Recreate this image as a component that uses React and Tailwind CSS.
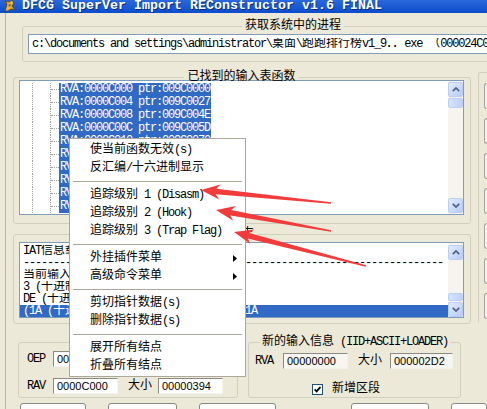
import React from "react";

function M({ t }) {
  const parts = t.split(/([\x20-\x7E]+)/).filter((p) => p !== "");
  return (
    <>
      {parts.map((p, i) =>
        /^[\x20-\x7E]+$/.test(p) ? (
          <span key={i} className="tracking-[-1.2px] whitespace-pre">
            {p}
          </span>
        ) : (
          <span key={i}>{p}</span>
        )
      )}
    </>
  );
}

function ScrollBtn({ up }) {
  return (
    <div className="w-[15px] h-[15px] shrink-0 rounded-[2px] border border-[#BACDF4] bg-linear-to-br from-[#E4ECFE] to-[#B7CBF7] flex items-center justify-center">
      <svg width="8" height="5" viewBox="0 0 8 5">
        <path
          d={up ? "M0.8 4.2L4 1L7.2 4.2" : "M0.8 0.8L4 4L7.2 0.8"}
          fill="none"
          stroke="#4D6185"
          strokeWidth="1.7"
        />
      </svg>
    </div>
  );
}

function Thumb({ h }) {
  return (
    <div
      className={
        "w-[15px] shrink-0 rounded-[2px] border border-[#BACDF4] bg-linear-to-r from-[#D7E3FD] to-[#BFD1F8] " +
        h
      }
    />
  );
}

function arrowPoints(tx, ty, ex, ey) {
  const dx = ex - tx;
  const dy = ey - ty;
  const L = Math.hypot(dx, dy);
  const ux = dx / L;
  const uy = dy / L;
  const nx = -uy;
  const ny = ux;
  const p = (a, b) => [tx + ux * a + nx * b, ty + uy * a + ny * b];
  const pts = [
    [tx, ty],
    p(19, 7.5),
    p(15, 2.8),
    [ex + nx * 0.7, ey + ny * 0.7],
    [ex - nx * 0.7, ey - ny * 0.7],
    p(15, -2.8),
    p(19, -7.5),
  ];
  return pts.map((q) => q[0].toFixed(1) + "," + q[1].toFixed(1)).join(" ");
}

const treeRows = [
  "RVA:0000C000 ptr:009C0000",
  "RVA:0000C004 ptr:009C0027",
  "RVA:0000C008 ptr:009C004E",
  "RVA:0000C00C ptr:009C005D",
  "RVA:0000C010 ptr:009C0070",
  "RVA:0000C014 ptr:009C0088",
  "RVA:0000C018 ptr:009C009A",
  "RVA:0000C01C ptr:009C00B1",
  "RVA:0000C020 ptr:009C00C9",
  "RVA:0000C024 ptr:009C00DE",
];

const iatRows = [
  "IAT信息载入完毕",
  "-".repeat(70),
  "当前输入表:",
  "3 (十进制:3) 个模块",
  "DE (十进制:222) 个函数",
];

const menu = [
  { t: "使当前函数无效(s)" },
  { t: "反汇编/十六进制显示" },
  "sep",
  { t: "追踪级别 1 (Disasm)" },
  { t: "追踪级别 2 (Hook)" },
  { t: "追踪级别 3 (Trap Flag)" },
  "sep",
  { t: "外挂插件菜单", sub: true },
  { t: "高级命令菜单", sub: true },
  "sep",
  { t: "剪切指针数据(s)" },
  { t: "删除指针数据(s)" },
  "sep",
  { t: "展开所有结点" },
  { t: "折叠所有结点" },
];

function Input({ value, w, bg }) {
  return (
    <div
      className={
        "h-[16px] border border-t-[#8C8A82] border-l-[#8C8A82] border-b-[#F4F3EE] border-r-[#F4F3EE] flex items-center pl-[3px] font-['Liberation_Sans',sans-serif] text-[11px] leading-[11px] " +
        w +
        " " +
        bg
      }
    >
      {value}
    </div>
  );
}

export default function App() {
  return (
    <div className="relative w-[487px] h-[409px] overflow-hidden bg-[#ECE9D8] text-black text-[12px] leading-[12px] font-['Liberation_Mono','Noto_Sans_CJK_SC',monospace]">
      {/* title bar */}
      <div className="h-[13px] flex items-start bg-linear-to-b from-[#2A68DC] to-[#0B4CCB]">
        <svg width="13" height="12" viewBox="0 0 13 12" className="ml-[3px] shrink-0">
          <path d="M2 11L4 4L2 1L6 2L9 0L11 3L9 6L12 10L8 9L5 11Z" fill="#E2B23A" stroke="#5A3A10" strokeWidth="0.8" />
          <path d="M5 5L8 4L7 7Z" fill="#8A5A18" />
        </svg>
        <div className="ml-[6px] font-['Liberation_Mono',monospace] font-bold text-[13.33px] leading-[11px] text-white whitespace-pre [text-shadow:1px_1px_0_#0A2A7A]">
          DFCG SuperVer Import REConstructor v1.6 FINAL
        </div>
      </div>

      {/* body */}
      <div className="ml-[5px] h-[396px] border-l border-[#B9B6A6] flex flex-col">
        {/* process group */}
        <fieldset className="mt-[7px] ml-[16px] w-[463px] shrink-0 border border-[#D0D0BF] rounded-[3px] pl-[5px] pr-[9px] pb-[7px]">
          <legend className="ml-[214px] px-[3px] leading-[12px]">
            <M t="获取系统中的进程" />
          </legend>
          <div className="mt-[2px] h-[20px] border border-[#7F9DB9] bg-white flex items-center">
            <div className="flex-1 overflow-hidden whitespace-nowrap pl-[3px] leading-[12px]">
              <M t={"c:\\documents and settings\\administrator\\桌面\\跑跑排行榜v1_9．．exe （000024C0)"} />
            </div>
            <div className="w-[14px] h-[16px] mr-[1px] shrink-0 border border-t-white border-l-white border-b-[#716F64] border-r-[#716F64] bg-[#F1EFE6] flex items-center justify-center">
              <svg width="7" height="4" viewBox="0 0 7 4">
                <path d="M0 0H7L3.5 4Z" fill="#000" />
              </svg>
            </div>
          </div>
        </fieldset>

        <div className="flex items-start shrink-0">
          <div className="ml-[7px] flex flex-col">
            {/* found functions group */}
            <fieldset className="mt-[12px] w-[458px] border border-[#D0D0BF] rounded-[3px] pl-[5px] pr-[6px] pb-[8px]">
              <legend className="mx-auto px-[3px] leading-[6px]">
                <M t="已找到的输入表函数" />
              </legend>
              <div className="h-[135px] border border-[#7F9DB9] bg-white flex">
                <div className="flex-1 flex flex-col pt-[2px] overflow-hidden">
                  {treeRows.map((r, i) => (
                    <div key={i} className="flex h-[13px] shrink-0">
                      <div className="w-[12px]" />
                      <div className="w-[18px] border-l border-dotted border-[#A0A0A0]" />
                      <div className="w-[9px] border-l border-dotted border-[#A0A0A0] flex items-center">
                        <div className="w-full border-t border-dotted border-[#A0A0A0]" />
                      </div>
                      <div className="bg-[#316AC5] text-white px-[1px] leading-[13px] whitespace-nowrap">
                        <M t={r} />
                      </div>
                    </div>
                  ))}
                </div>
                <div className="w-[15px] bg-[#F5F4EE] flex flex-col pt-[1px] pb-[1px]">
                  <ScrollBtn up />
                  <div className="mt-[1px]">
                    <Thumb h="h-[10px]" />
                  </div>
                  <div className="flex-1" />
                  <ScrollBtn />
                </div>
              </div>
            </fieldset>

            {/* log group */}
            <fieldset className="mt-[7px] w-[458px] border border-[#D0D0BF] rounded-[3px] pl-[5px] pr-[6px] pb-[5px]">
              <legend className="mx-auto px-[3px] leading-[6px]">
                <M t="日志" />
              </legend>
              <div className="mt-[5px] h-[76px] border border-[#7F9DB9] bg-white flex">
                <div className="flex-1 flex flex-col pt-[2px] overflow-hidden">
                  {iatRows.map((r, i) => (
                    <div key={i} className="h-[12px] shrink-0 pl-[3px] leading-[12px] whitespace-nowrap overflow-hidden">
                      <M t={r} />
                    </div>
                  ))}
                  <div className="h-[12px] shrink-0 pl-[3px] leading-[12px] whitespace-nowrap bg-[#316AC5] text-white">
                    <M t="(1A (十进制:26) 个无效指针, 已剪切)= 1A" />
                  </div>
                </div>
                <div className="w-[15px] bg-[#F5F4EE] flex flex-col pt-[2px]">
                  <ScrollBtn up />
                  <div className="flex-1" />
                  <Thumb h="h-[8px]" />
                  <div className="mt-[1px]">
                    <ScrollBtn />
                  </div>
                </div>
              </div>
            </fieldset>
          </div>

          {/* right strip (cut off) */}
          <div className="ml-[7px] mt-[10px] w-[20px] h-[250px] border-l border-t border-[#D0D0BF] rounded-tl-[3px] flex flex-col gap-[9px] pt-[10px] pl-[5px] overflow-hidden">
            {[0, 1, 2, 3, 4, 5, 6].map((i) => (
              <div
                key={i}
                className="h-[26px] shrink-0 border-l border-t border-b border-[#A8A69A] rounded-l-[3px] bg-[#F2F1EA]"
              />
            ))}
          </div>
        </div>

        {/* lower groups */}
        <div className="flex items-start mt-[15px] shrink-0">
          <fieldset className="ml-[12px] w-[220px] border border-[#D0D0BF] rounded-[3px] pl-[8px] pb-[3px]">
            <legend className="mx-auto px-[3px] leading-[6px]">
              <M t="输入表所需的信息" />
            </legend>
            <div className="mt-[6px] flex items-center h-[16px]">
              <div className="w-[26px]">
                <M t="OEP" />
              </div>
              <Input value="0000C000" w="w-[65px]" bg="bg-white" />
            </div>
            <div className="mt-[11px] flex items-center h-[16px]">
              <div className="w-[26px]">
                <M t="RAV" />
              </div>
              <Input value="0000C000" w="w-[65px]" bg="bg-white" />
              <div className="ml-[10px] w-[30px]">
                <M t="大小" />
              </div>
              <Input value="00000394" w="w-[65px]" bg="bg-white" />
            </div>
          </fieldset>

          <fieldset className="ml-[10px] w-[213px] border border-[#D0D0BF] rounded-[3px] pl-[6px] pb-[2px]">
            <legend className="ml-[5px] px-[2px] leading-[6px]">
              <M t="新的输入信息 (IID+ASCII+LOADER)" />
            </legend>
            <div className="mt-[8px] flex items-center h-[16px]">
              <div className="w-[28px]">
                <M t="RVA" />
              </div>
              <Input value="00000000" w="w-[65px]" bg="bg-[#F7F6F0]" />
              <div className="ml-[10px] w-[32px]">
                <M t="大小" />
              </div>
              <Input value="000002D2" w="w-[63px]" bg="bg-[#F7F6F0]" />
            </div>
            <div className="mt-[14px] flex items-center h-[12px] pl-[57px]">
              <div className="w-[11px] h-[11px] border border-[#1C5180] bg-white flex items-center justify-center">
                <svg width="7" height="7" viewBox="0 0 7 7">
                  <path d="M0.6 3.4L2.6 5.4L6.4 1" stroke="#000" strokeWidth="1.8" fill="none" />
                </svg>
              </div>
              <div className="ml-[9px]">
                <M t="新增区段" />
              </div>
            </div>
          </fieldset>
        </div>

        {/* bottom buttons (cut off) */}
        <div className="flex mt-[5px] shrink-0">
          <div className="ml-[14px] w-[73px] h-[22px] border border-[#8A8A85] rounded-t-[3px] bg-linear-to-b from-white to-[#EEEDE6]" />
          <div className="ml-[22px] w-[76px] h-[22px] border border-[#8A8A85] rounded-t-[3px] bg-linear-to-b from-white to-[#EEEDE6]" />
          <div className="ml-[22px] w-[85px] h-[22px] border border-[#8A8A85] rounded-t-[3px] bg-linear-to-b from-white to-[#EEEDE6]" />
          <div className="ml-[75px] w-[85px] h-[22px] border border-[#8A8A85] rounded-t-[3px] bg-linear-to-b from-white to-[#EEEDE6]" />
          <div className="ml-[22px] w-[40px] h-[22px] border border-[#8A8A85] rounded-t-[3px] bg-linear-to-b from-white to-[#EEEDE6]" />
        </div>
      </div>

      {/* context menu */}
      <div className="absolute left-[69px] top-[138px] w-[177px] bg-white border border-[#ACA899] pt-[2px] pb-[1px]">
        {menu.map((m, i) =>
          m === "sep" ? (
            <div key={i} className="h-[9px] flex items-center px-[3px]">
              <div className="w-full border-t border-[#ACA899]" />
            </div>
          ) : (
            <div key={i} className="h-[18px] flex items-center pl-[20px] leading-[12px] whitespace-nowrap">
              <span>
                <M t={m.t} />
              </span>
              {m.sub && (
                <svg width="4" height="7" viewBox="0 0 4 7" className="ml-auto mr-[8px]">
                  <path d="M0 0L4 3.5L0 7Z" fill="#000" />
                </svg>
              )}
            </div>
          )
        )}
      </div>

      {/* annotation arrows */}
      <svg className="absolute left-0 top-0 pointer-events-none" width="487" height="409" viewBox="0 0 487 409">
        <polygon points={arrowPoints(201, 190, 331, 203)} fill="#F23B3B" />
        <polygon points={arrowPoints(216, 210, 331, 231)} fill="#F23B3B" />
        <polygon points={arrowPoints(234, 232, 366, 266)} fill="#F23B3B" />
      </svg>
    </div>
  );
}
